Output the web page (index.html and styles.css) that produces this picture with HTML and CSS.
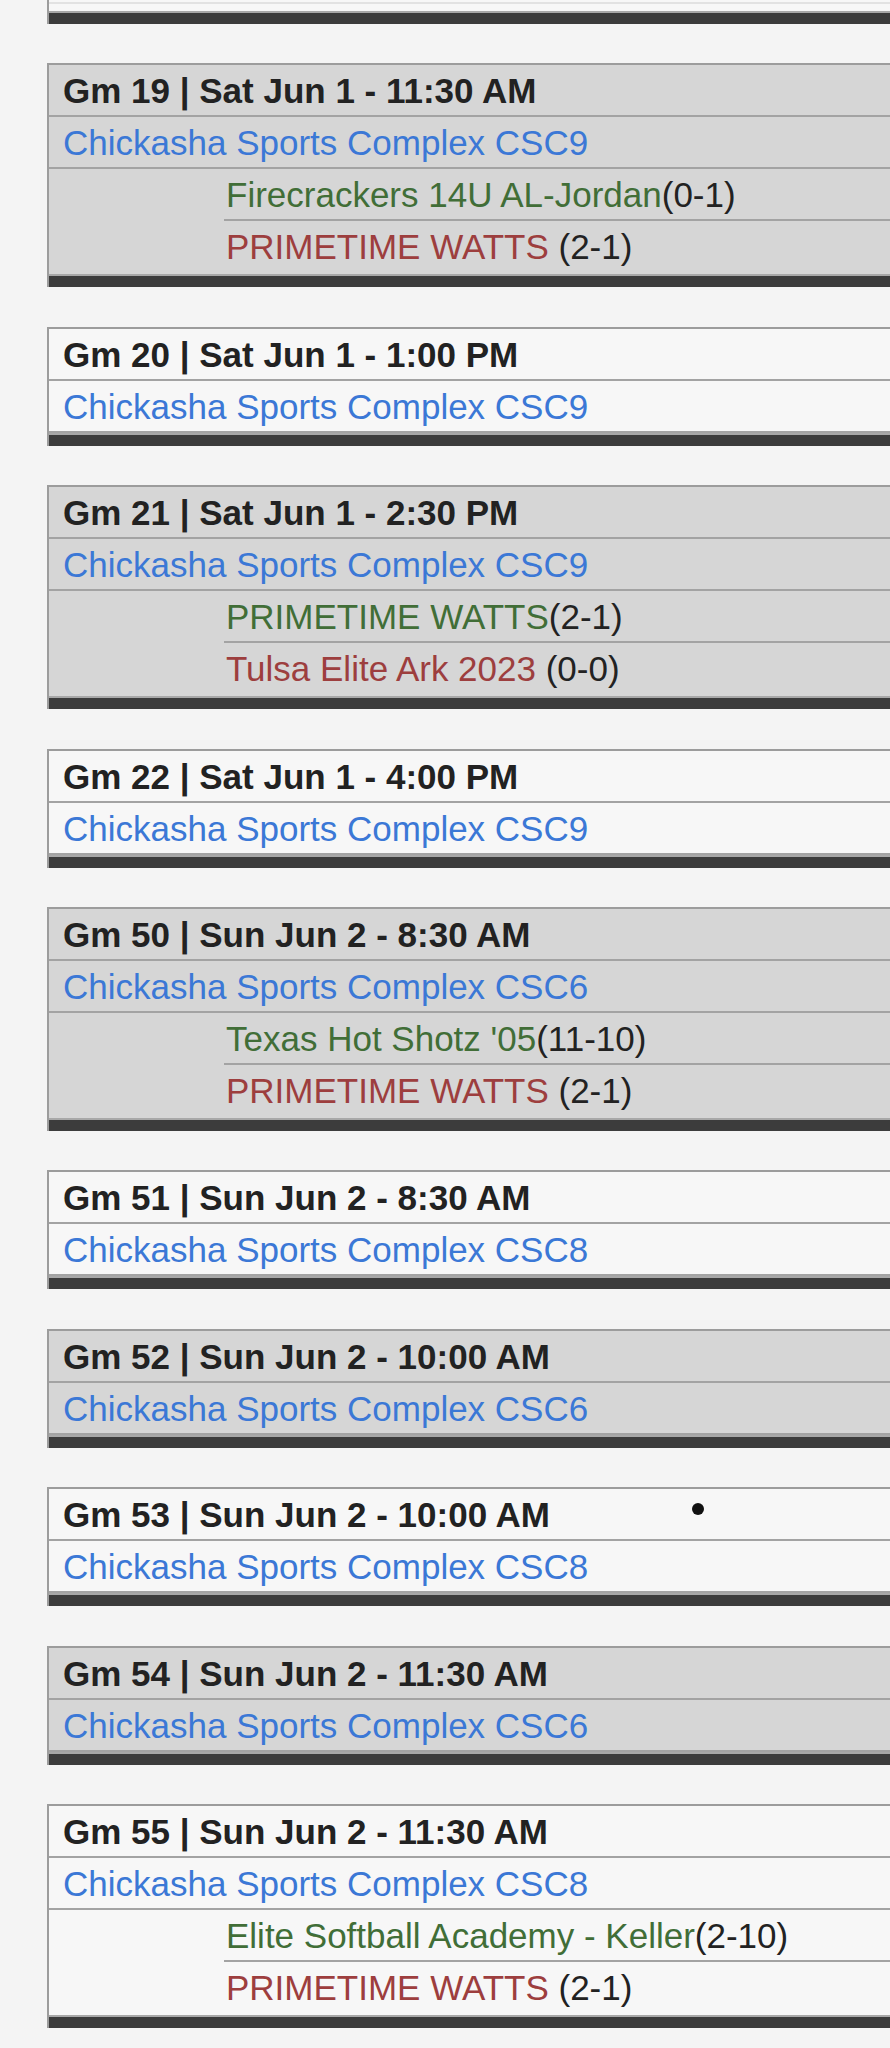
FILE: index.html
```html
<!DOCTYPE html>
<html>
<head>
<meta charset="utf-8">
<link rel="stylesheet" href="styles.css">
</head>
<body>
<div class="schedule">
  <div class="card card-white tail">
    <div class="row tail-row"></div>
    <div class="bar"></div>
  </div>

  <div class="card card-gray">
    <div class="row head">Gm 19 | Sat Jun 1 - 11:30 AM</div>
    <div class="row venue">Chickasha Sports Complex CSC9</div>
    <div class="teams">
      <div class="team team-first"><span class="win">Firecrackers 14U AL-Jordan</span>(0-1)</div>
      <div class="team"><span class="loss">PRIMETIME WATTS</span> (2-1)</div>
    </div>
    <div class="bar"></div>
  </div>

  <div class="card card-white">
    <div class="row head">Gm 20 | Sat Jun 1 - 1:00 PM</div>
    <div class="row venue">Chickasha Sports Complex CSC9</div>
    <div class="bar"></div>
  </div>

  <div class="card card-gray">
    <div class="row head">Gm 21 | Sat Jun 1 - 2:30 PM</div>
    <div class="row venue">Chickasha Sports Complex CSC9</div>
    <div class="teams">
      <div class="team team-first"><span class="win">PRIMETIME WATTS</span>(2-1)</div>
      <div class="team"><span class="loss">Tulsa Elite Ark 2023</span> (0-0)</div>
    </div>
    <div class="bar"></div>
  </div>

  <div class="card card-white">
    <div class="row head">Gm 22 | Sat Jun 1 - 4:00 PM</div>
    <div class="row venue">Chickasha Sports Complex CSC9</div>
    <div class="bar"></div>
  </div>

  <div class="card card-gray">
    <div class="row head">Gm 50 | Sun Jun 2 - 8:30 AM</div>
    <div class="row venue">Chickasha Sports Complex CSC6</div>
    <div class="teams">
      <div class="team team-first"><span class="win">Texas Hot Shotz '05</span>(11-10)</div>
      <div class="team"><span class="loss">PRIMETIME WATTS</span> (2-1)</div>
    </div>
    <div class="bar"></div>
  </div>

  <div class="card card-white">
    <div class="row head">Gm 51 | Sun Jun 2 - 8:30 AM</div>
    <div class="row venue">Chickasha Sports Complex CSC8</div>
    <div class="bar"></div>
  </div>

  <div class="card card-gray">
    <div class="row head">Gm 52 | Sun Jun 2 - 10:00 AM</div>
    <div class="row venue">Chickasha Sports Complex CSC6</div>
    <div class="bar"></div>
  </div>

  <div class="card card-white">
    <div class="row head">Gm 53 | Sun Jun 2 - 10:00 AM<span class="dot"></span></div>
    <div class="row venue">Chickasha Sports Complex CSC8</div>
    <div class="bar"></div>
  </div>

  <div class="card card-gray">
    <div class="row head">Gm 54 | Sun Jun 2 - 11:30 AM</div>
    <div class="row venue">Chickasha Sports Complex CSC6</div>
    <div class="bar"></div>
  </div>

  <div class="card card-white">
    <div class="row head">Gm 55 | Sun Jun 2 - 11:30 AM</div>
    <div class="row venue">Chickasha Sports Complex CSC8</div>
    <div class="teams">
      <div class="team team-first"><span class="win">Elite Softball Academy - Keller</span>(2-10)</div>
      <div class="team"><span class="loss">PRIMETIME WATTS</span> (2-1)</div>
    </div>
    <div class="bar"></div>
  </div>
</div>
</body>
</html>
```

FILE: styles.css
```css
html, body {
  margin: 0;
  padding: 0;
}

body {
  background: #f4f4f4;
  overflow: hidden;
  font-family: "Liberation Sans", Arial, Helvetica, sans-serif;
  color: #222222;
}

.schedule {
  display: flex;
  flex-direction: column;
  gap: 39.4px;
  padding-left: 47px;
  padding-bottom: 20px;
}

.card {
  border-top: 2px solid #9c9c9c;
  border-left: 2px solid #9c9c9c;
  margin-right: -20px;
  display: flex;
  flex-direction: column;
}

.card-gray {
  background: #d6d6d6;
}

.card-white {
  background: #f7f7f7;
}

.tail {
  border-top: none;
}

.row {
  height: 50px;
  line-height: 52px;
  border-bottom: 2px solid #a3a3a3;
  padding-left: 14px;
  font-size: 35px;
  white-space: nowrap;
}

.tail-row {
  height: 7px;
  border-top: 2px solid #e2e2e2;
  margin-top: 2px;
  border-bottom: 0;
}

.head {
  font-weight: bold;
  color: #222222;
  position: relative;
}

.venue {
  color: #3b78d6;
}

.teams {
  display: flex;
  flex-direction: column;
  margin-left: 175px;
}

.team {
  height: 50px;
  line-height: 52px;
  padding-left: 2px;
  font-size: 35px;
  white-space: nowrap;
  color: #222222;
}

.team-first {
  border-bottom: 2px solid #a3a3a3;
}

.team + .team {
  height: 53px;
}

.win {
  color: #416e37;
}

.loss {
  color: #9d3e3e;
}

.bar {
  height: 11px;
  border-top: 2px solid #a8a8a8;
  background: #3c3c3c;
}

.dot {
  position: absolute;
  left: 643px;
  top: 14px;
  width: 12px;
  height: 12px;
  border-radius: 50%;
  background: #111111;
}
```
